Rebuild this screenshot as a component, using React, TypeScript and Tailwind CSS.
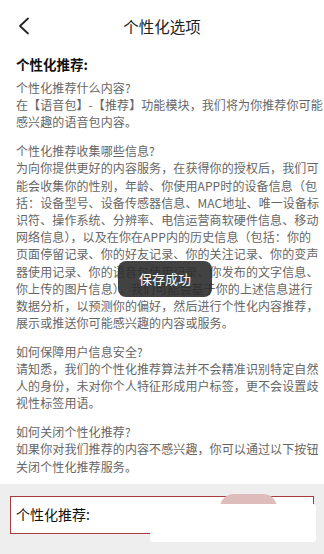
import React from "react"

const font = { fontFamily: '"Noto Sans CJK SC", "Noto Sans", sans-serif' }

const sections: string[][] = [
  [
    "个性化推荐什么内容?",
    "在【语音包】-【推荐】功能模块，我们将为你推荐你可能",
    "感兴趣的语音包内容。",
  ],
  [
    "个性化推荐收集哪些信息?",
    "为向你提供更好的内容服务，在获得你的授权后，我们可",
    "能会收集你的性别，年龄、你使用APP时的设备信息（包",
    "括：设备型号、设备传感器信息、MAC地址、唯一设备标",
    "识符、操作系统、分辨率、电信运营商软硬件信息、移动",
    "网络信息），以及在你在APP内的历史信息（包括：你的",
    "页面停留记录、你的好友记录、你的关注记录、你的变声",
    "器使用记录、你的语音包使用记录、你发布的文字信息、",
    "你上传的图片信息），我们可能会基于你的上述信息进行",
    "数据分析，以预测你的偏好，然后进行个性化内容推荐，",
    "展示或推送你可能感兴趣的内容或服务。",
  ],
  [
    "如何保障用户信息安全?",
    "请知悉，我们的个性化推荐算法并不会精准识别特定自然",
    "人的身份，未对你个人特征形成用户标签，更不会设置歧",
    "视性标签用语。",
  ],
  [
    "如何关闭个性化推荐?",
    "如果你对我们推荐的内容不感兴趣，你可以通过以下按钮",
    "关闭个性化推荐服务。",
  ],
]

export default function App() {
  return (
    <div className="relative h-[554px] w-[324px] overflow-hidden bg-white" style={font}>
      {/* header */}
      <div className="relative flex h-[54px] items-center justify-center">
        <svg className="absolute left-[17px] top-[17px]" width="14" height="18" viewBox="0 0 14 18">
          <path d="M11 1.5 L3 9 L11 16.5" fill="none" stroke="#222" strokeWidth="1.8" strokeLinecap="round" strokeLinejoin="round" />
        </svg>
        <span className="text-[15.5px] leading-none text-[#222]">个性化选项</span>
      </div>

      <div className="px-4">
        <div className="text-[13.5px] font-bold leading-[20px] text-[#111]">个性化推荐:</div>
        <div className="mt-[5px] flex flex-col gap-[11.5px] text-[12px] leading-[17.2px] tracking-[0.1px] text-[#666]">
          {sections.map((lines, i) => (
            <div key={i}>
              {lines.map((l, j) => (
                <div key={j} className="whitespace-nowrap">
                  {l}
                </div>
              ))}
            </div>
          ))}
        </div>
      </div>

      {/* bottom switch area */}
      <div className="relative mt-[9px] h-[80px] bg-[#eeeeee] pt-[12px]">
        <div className="mx-[10px] flex h-[38px] items-center border-[1.5px] border-[#a83c3c] bg-white pl-[5px]">
          <span className="text-[14px] text-[#111]">个性化推荐:</span>
        </div>
        <div className="absolute left-[220px] top-[10px] h-[14px] w-[57px] rounded-t-full bg-[#dfbcbc]" />
        <div className="absolute left-[150px] top-[20px] h-[38px] w-[166px] rounded-[3px] bg-white" />
      </div>

      {/* toast */}
      <div className="absolute left-[118px] top-[261px] flex h-[36px] w-[94px] items-center justify-center rounded-[8px] bg-[#2e2e2e]/90">
        <span className="text-[13px] text-white">保存成功</span>
      </div>
    </div>
  )
}
